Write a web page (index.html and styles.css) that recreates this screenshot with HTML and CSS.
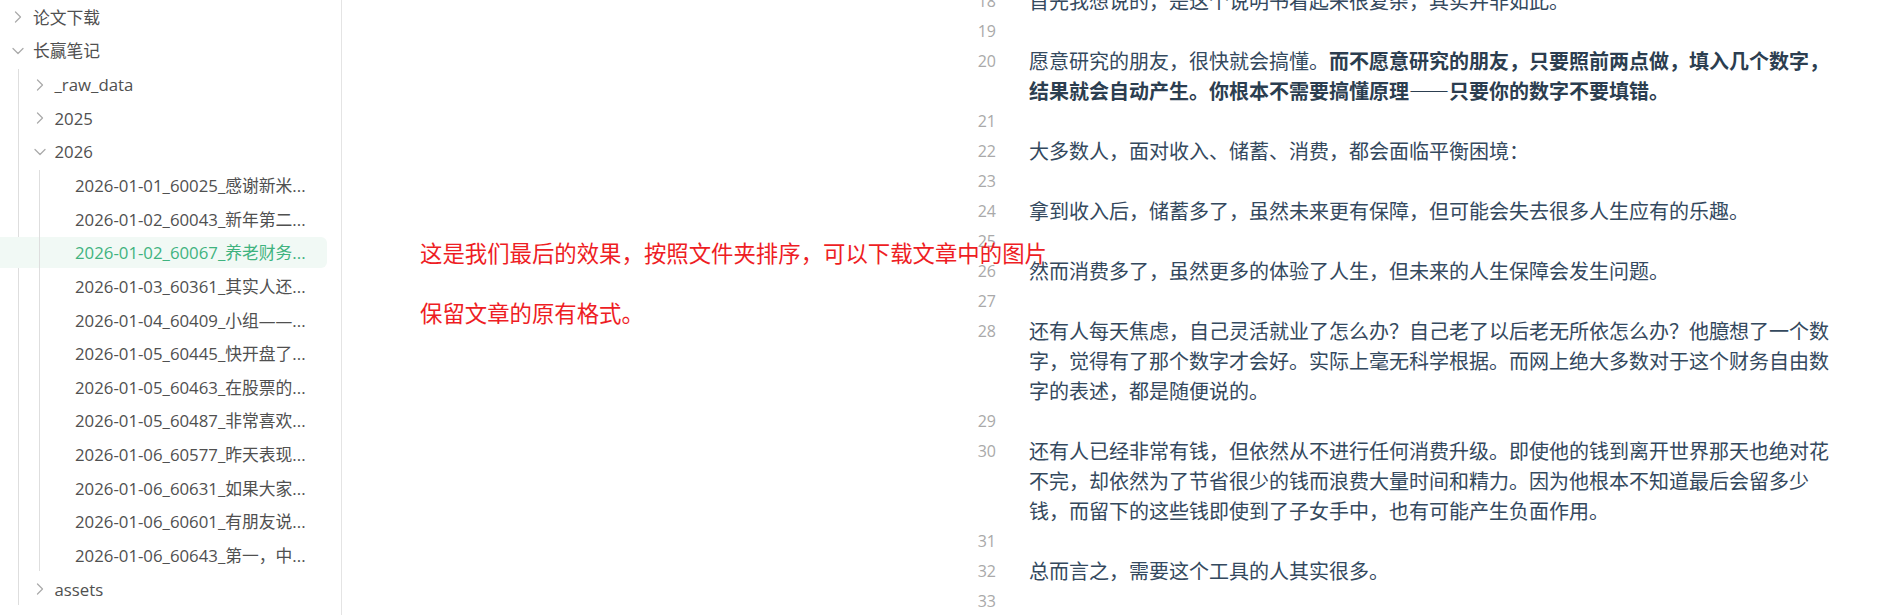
FILE: index.html
```html
<!DOCTYPE html>
<html lang="zh-CN">
<head>
<meta charset="utf-8">
<title>长赢笔记</title>
<link rel="stylesheet" href="styles.css">
</head>
<body>
<div class="app">
  <aside class="sidebar">
    <div class="tree">
      <div class="row lvl1">
        <svg class="chev" viewBox="0 0 14 14"><polyline points="4.5,2 9.5,7 4.5,12"/></svg>
        <span class="label">论文下载</span>
      </div>
      <div class="row lvl1">
        <svg class="chev" viewBox="0 0 14 14"><polyline points="2,4.5 7,9.5 12,4.5"/></svg>
        <span class="label">长赢笔记</span>
      </div>
      <div class="children c1">
        <div class="row lvl2">
          <svg class="chev" viewBox="0 0 14 14"><polyline points="4.5,2 9.5,7 4.5,12"/></svg>
          <span class="label">_raw_data</span>
        </div>
        <div class="row lvl2">
          <svg class="chev" viewBox="0 0 14 14"><polyline points="4.5,2 9.5,7 4.5,12"/></svg>
          <span class="label">2025</span>
        </div>
        <div class="row lvl2">
          <svg class="chev" viewBox="0 0 14 14"><polyline points="2,4.5 7,9.5 12,4.5"/></svg>
          <span class="label">2026</span>
        </div>
        <div class="children c2">
          <div class="row file"><span class="label">2026-01-01_60025_感谢新米...</span></div>
          <div class="row file"><span class="label">2026-01-02_60043_新年第二...</span></div>
          <div class="row file active"><span class="label">2026-01-02_60067_养老财务...</span></div>
          <div class="row file"><span class="label">2026-01-03_60361_其实人还...</span></div>
          <div class="row file"><span class="label">2026-01-04_60409_小组——...</span></div>
          <div class="row file"><span class="label">2026-01-05_60445_快开盘了...</span></div>
          <div class="row file"><span class="label">2026-01-05_60463_在股票的...</span></div>
          <div class="row file"><span class="label">2026-01-05_60487_非常喜欢...</span></div>
          <div class="row file"><span class="label">2026-01-06_60577_昨天表现...</span></div>
          <div class="row file"><span class="label">2026-01-06_60631_如果大家...</span></div>
          <div class="row file"><span class="label">2026-01-06_60601_有朋友说...</span></div>
          <div class="row file"><span class="label">2026-01-06_60643_第一，中...</span></div>
        </div>
        <div class="row lvl2">
          <svg class="chev" viewBox="0 0 14 14"><polyline points="4.5,2 9.5,7 4.5,12"/></svg>
          <span class="label">assets</span>
        </div>
      </div>
    </div>
  </aside>

  <main class="main">
    <div class="editor">
      <div class="line"><span class="ln">18</span><p class="tx">首先我想说的，是这个说明书看起来很复杂，其实并非如此。</p></div>
      <div class="line"><span class="ln">19</span><p class="tx"></p></div>
      <div class="line"><span class="ln">20</span><p class="tx">愿意研究的朋友，很快就会搞懂。<strong>而不愿意研究的朋友，只要照前两点做，填入几个数字，结果就会自动产生。你根本不需要搞懂原理——只要你的数字不要填错。</strong></p></div>
      <div class="line"><span class="ln">21</span><p class="tx"></p></div>
      <div class="line"><span class="ln">22</span><p class="tx">大多数人，面对收入、储蓄、消费，都会面临平衡困境：</p></div>
      <div class="line"><span class="ln">23</span><p class="tx"></p></div>
      <div class="line"><span class="ln">24</span><p class="tx">拿到收入后，储蓄多了，虽然未来更有保障，但可能会失去很多人生应有的乐趣。</p></div>
      <div class="line"><span class="ln">25</span><p class="tx"></p></div>
      <div class="line"><span class="ln">26</span><p class="tx">然而消费多了，虽然更多的体验了人生，但未来的人生保障会发生问题。</p></div>
      <div class="line"><span class="ln">27</span><p class="tx"></p></div>
      <div class="line"><span class="ln">28</span><p class="tx">还有人每天焦虑，自己灵活就业了怎么办？自己老了以后老无所依怎么办？他臆想了一个数字，觉得有了那个数字才会好。实际上毫无科学根据。而网上绝大多数对于这个财务自由数字的表述，都是随便说的。</p></div>
      <div class="line"><span class="ln">29</span><p class="tx"></p></div>
      <div class="line"><span class="ln">30</span><p class="tx">还有人已经非常有钱，但依然从不进行任何消费升级。即使他的钱到离开世界那天也绝对花不完，却依然为了节省很少的钱而浪费大量时间和精力。因为他根本不知道最后会留多少钱，而留下的这些钱即使到了子女手中，也有可能产生负面作用。</p></div>
      <div class="line"><span class="ln">31</span><p class="tx"></p></div>
      <div class="line"><span class="ln">32</span><p class="tx">总而言之，需要这个工具的人其实很多。</p></div>
      <div class="line"><span class="ln">33</span><p class="tx"></p></div>
    </div>

    <div class="note">
      <p>这是我们最后的效果，按照文件夹排序，可以下载文章中的图片</p>
      <p>保留文章的原有格式。</p>
    </div>
  </main>
</div>
</body>
</html>
```

FILE: styles.css
```css
* {
  box-sizing: border-box;
}

html, body {
  margin: 0;
  padding: 0;
  background: #ffffff;
}

body {
  width: 1888px;
  height: 615px;
  overflow: hidden;
  font-family: "Open Sans", "Noto Sans CJK SC", sans-serif;
}

.app {
  display: flex;
  width: 1888px;
  height: 615px;
}

/* ---------- sidebar ---------- */
.sidebar {
  width: 342px;
  flex: 0 0 342px;
  height: 615px;
  border-right: 1px solid #e4e4e4;
  padding: 1.8px 14px 0 0;
  overflow: hidden;
}

.tree,
.children {
  display: flex;
  flex-direction: column;
  gap: 2.65px;
}

.children {
  position: relative;
}

.children::before {
  content: "";
  position: absolute;
  top: 0;
  bottom: 0;
  width: 1px;
  background: #dedede;
}

.c1::before {
  left: 18px;
}

.c2::before {
  left: 39px;
}

.row {
  height: 31px;
  display: flex;
  align-items: center;
  gap: 8px;
  font-size: 16.8px;
  color: #505050;
  white-space: nowrap;
  border-radius: 0 6px 6px 0;
}

.lvl1 {
  padding-left: 11px;
}

.lvl2 {
  padding-left: 32.5px;
}

.file {
  padding-left: 75px;
}

.active {
  background: #f1f9f5;
  color: #3fb37f;
}

.chev {
  width: 14px;
  height: 14px;
  flex: 0 0 14px;
  fill: none;
  stroke: #ababab;
  stroke-width: 1.3;
  stroke-linecap: round;
  stroke-linejoin: round;
}

.label {
  line-height: 31px;
}

/* ---------- editor ---------- */
.main {
  flex: 1;
  position: relative;
  height: 615px;
  overflow: hidden;
  padding-left: 614px;
}

.editor {
  margin-top: -14px;
  display: flex;
  flex-direction: column;
}

.line {
  display: grid;
  grid-template-columns: 40px 810px;
  column-gap: 33px;
  min-height: 30px;
}

.ln {
  font-family: "Open Sans", sans-serif;
  font-size: 16px;
  line-height: 30px;
  color: #a9a9a9;
  text-align: right;
}

.tx {
  margin: 0;
  font-family: "Noto Sans CJK SC", "Open Sans", sans-serif;
  font-size: 20px;
  line-height: 30px;
  color: #34495e;
  min-height: 30px;
}

.tx strong {
  font-weight: 700;
  color: #2c3e50;
}

/* ---------- annotation overlay ---------- */
.note {
  position: absolute;
  left: 78px;
  top: 239.2px;
  display: flex;
  flex-direction: column;
  gap: 33.5px;
}

.note p {
  margin: 0;
  font-family: "Noto Sans CJK SC", sans-serif;
  font-size: 22.4px;
  line-height: 26px;
  color: #ee1d24;
  white-space: nowrap;
}
```
